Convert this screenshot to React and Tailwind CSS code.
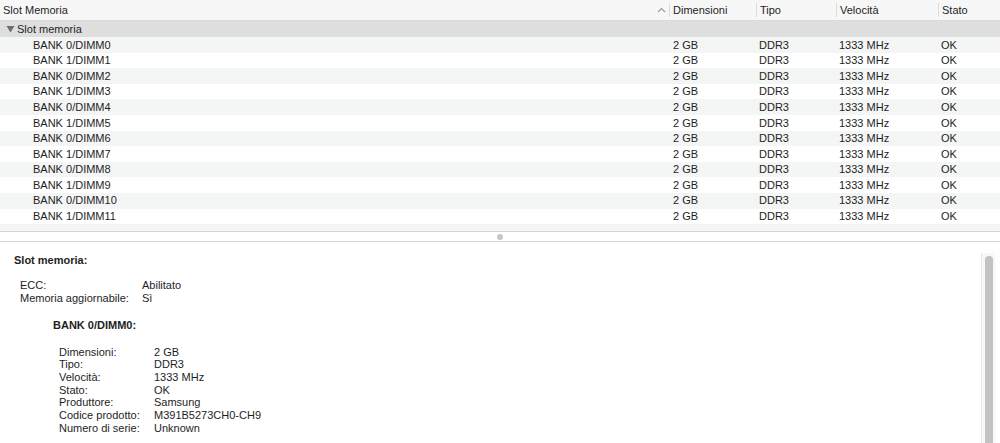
import React from 'react';

const rows = Array.from({ length: 12 }, (_, i) => ({
    name: `BANK ${i % 2}/DIMM${i}`,
    size: '2 GB',
    type: 'DDR3',
    speed: '1333 MHz',
    status: 'OK',
}));

const details = [
    ['Dimensioni:', '2 GB'],
    ['Tipo:', 'DDR3'],
    ['Velocità:', '1333 MHz'],
    ['Stato:', 'OK'],
    ['Produttore:', 'Samsung'],
    ['Codice prodotto:', 'M391B5273CH0-CH9'],
    ['Numero di serie:', 'Unknown'],
];

const Divider = () => <div className="w-px h-[14px] bg-[#dcdcdc]" />;

const App = () => (
    <div className="w-[1000px] h-[443px] overflow-hidden bg-white flex flex-col text-[11px] text-[#1e1e1e] font-['Liberation_Sans',Arial,sans-serif]">
        {/* table */}
        <div className="h-[232px] flex flex-col bg-[#f4f5f5] border-b border-[#d6d6d6]">
            <div className="h-[21px] flex items-center bg-[#f7f7f7] border-b border-[#dadada] shrink-0">
                <div className="w-[669px] pl-[3px] flex items-center">
                    <span className="flex-1">Slot Memoria</span>
                    <svg width="9" height="6" viewBox="0 0 9 6" className="mr-[3px]">
                        <path d="M1 5 L4.5 1.5 L8 5" fill="none" stroke="#9a9a9a" strokeWidth="1.1" />
                    </svg>
                </div>
                <Divider />
                <div className="w-[86px] pl-[3px]">Dimensioni</div>
                <Divider />
                <div className="w-[79px] pl-[3px]">Tipo</div>
                <Divider />
                <div className="w-[101px] pl-[3px]">Velocità</div>
                <Divider />
                <div className="flex-1 pl-[3px]">Stato</div>
            </div>
            <div className="h-[16px] flex items-center bg-[#dedede] pl-[6px] shrink-0">
                <svg width="9" height="8" viewBox="0 0 9 8" className="mr-[2px]">
                    <path d="M0.5 1 L8.5 1 L4.5 7.5 Z" fill="#6e6e6e" />
                </svg>
                <span>Slot memoria</span>
            </div>
            {rows.map((r, i) => (
                <div key={r.name} className={`h-[15.6px] flex items-center shrink-0 ${i % 2 === 0 ? 'bg-[#f4f5f5]' : 'bg-white'}`}>
                    <div className="w-[673px] pl-[33px]">{r.name}</div>
                    <div className="w-[86px]">{r.size}</div>
                    <div className="w-[80px]">{r.type}</div>
                    <div className="w-[102px]">{r.speed}</div>
                    <div className="flex-1">{r.status}</div>
                </div>
            ))}
        </div>

        {/* splitter */}
        <div className="h-[10px] shrink-0 flex items-center justify-center bg-white border-b border-[#d6d6d6]">
            <div className="w-[6px] h-[6px] rounded-full bg-[#c6c6c6]" />
        </div>

        {/* detail pane */}
        <div className="flex-1 flex min-h-0">
            <div className="flex-1 pl-[14px] pt-[12px] leading-[13px]">
                <div className="font-bold">Slot memoria:</div>
                <div className="mt-[11.5px] pl-[6px] grid grid-cols-[122px_1fr]">
                    <span>ECC:</span><span>Abilitato</span>
                    <span>Memoria aggiornabile:</span><span>Sì</span>
                </div>
                <div className="mt-[14px] pl-[39px] font-bold">BANK 0/DIMM0:</div>
                <div className="mt-[14px] pl-[45px] grid grid-cols-[95px_1fr] leading-[12.7px]">
                    {details.map(([k, v]) => (
                        <React.Fragment key={k}>
                            <span>{k}</span><span>{v}</span>
                        </React.Fragment>
                    ))}
                </div>
            </div>
            <div className="w-[14px] mt-[11px] mr-[5px] bg-[#f7f7f7] border-l border-[#e8e8e8] flex justify-center pt-[3px]">
                <div className="w-[8px] h-full rounded-t-full bg-[#c2c2c2]" />
            </div>
        </div>
    </div>
);

export default App;
